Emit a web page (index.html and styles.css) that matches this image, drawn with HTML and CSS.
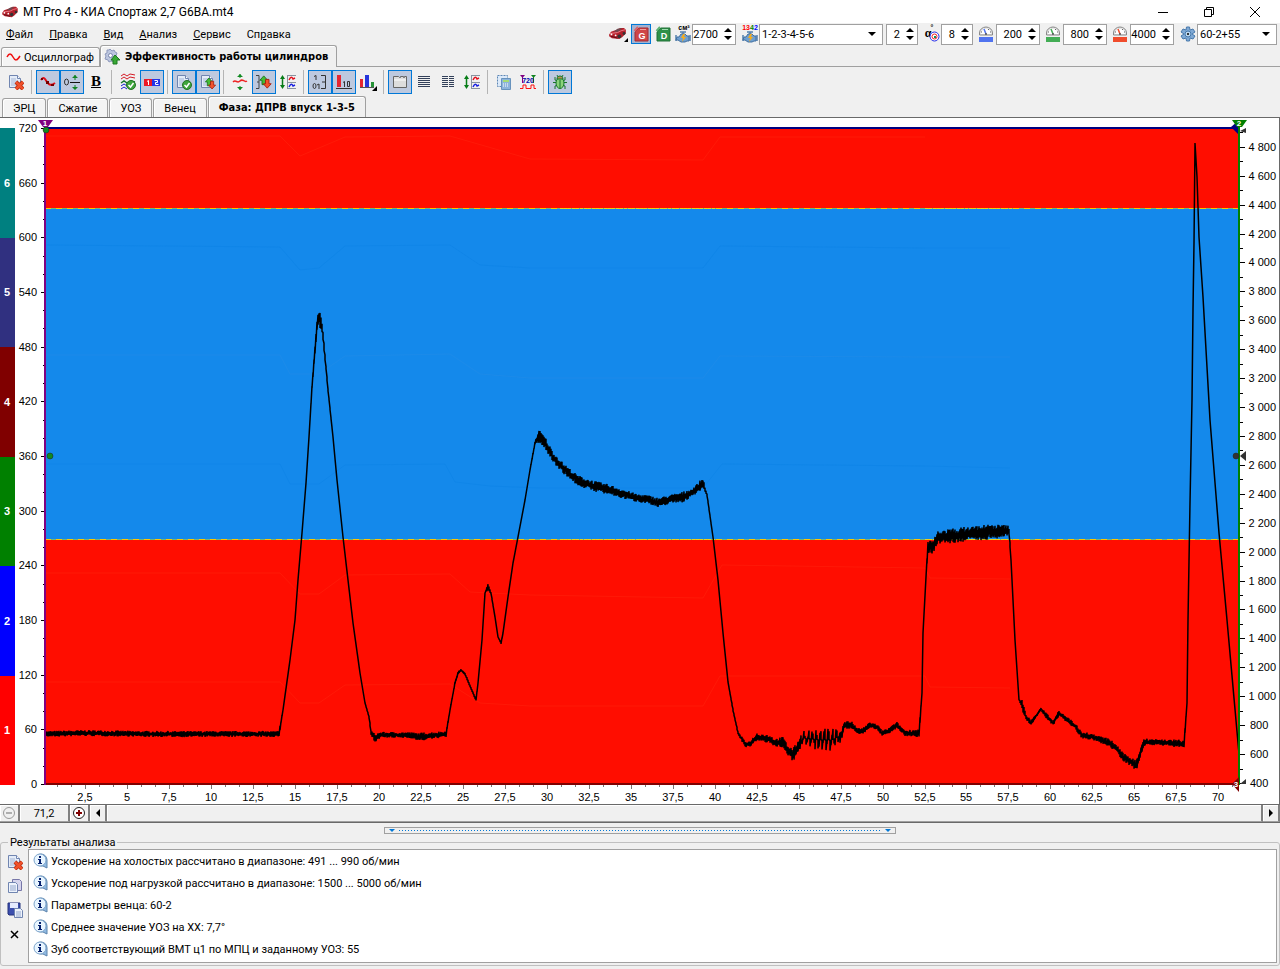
FILE: index.html
```html
<!DOCTYPE html>
<html lang="ru">
<head>
<meta charset="utf-8">
<title>MT Pro 4 - КИА Спортаж 2,7 G6BA.mt4</title>
<link rel="stylesheet" href="styles.css">
</head>
<body>
<svg class="defs" aria-hidden="true">
  <symbol id="car" viewBox="0 0 18 14"><path d="M0 8 2 5 8 3l4-2h4l2 2v4l-4 4-3 2-8-1-3-2z" fill="#b3202a"/><path d="m5 5 4-3 5-1-4 4z" fill="#6c4a50"/><path d="m1 7 8-1 4-2 4-1" stroke="#f0808a" fill="none"/><path d="m2 10 7 2" stroke="#5c0a12"/><circle cx="11" cy="10" r="2" fill="#333"/><circle cx="16" cy="7" r="1.500" fill="#333"/><circle cx="2.500" cy="8" r="1" fill="#fff"/><circle cx="7" cy="9" r="1" fill="#fff"/></symbol>
  <symbol id="page" viewBox="0 0 16 16"><path d="M1.500 1.500h8l3 3v9h-11z" fill="#e4ecf8" stroke="#7085b0"/><path d="M9.500 1.500v3h3" fill="#fff" stroke="#7085b0"/><path d="M3 5h5M3 7h7M3 9h7M3 11h7" stroke="#a5b6d6"/></symbol>
  <symbol id="delete" viewBox="0 0 16 16"><use href="#page"/><path d="m8 8 7 7m0-7-7 7" stroke="#a92a10" stroke-width="4"/><path d="m8 8 7 7m0-7-7 7" stroke="#f1502a" stroke-width="2.500"/></symbol>
  <symbol id="check" viewBox="0 0 16 16"><circle cx="11" cy="11" r="4.500" fill="#3fa53c" stroke="#247326"/><path d="m8.500 11 2 2 3-4" fill="none" stroke="#fff" stroke-width="1.500"/></symbol>
  <symbol id="updown" viewBox="0 0 14 16"><path d="m5 1 4.500 5H7v5H3V6H.5z" fill="#45bd35" stroke="#187318"/><path d="M7 5h4v5h2.500L9 15l-4.500-5H7z" fill="#f2532c" stroke="#a51d0c"/></symbol>
  <symbol id="stretch" viewBox="0 0 16 16"><path d="M2.500 3v10" stroke="#087d18" stroke-width="1.500"/><path d="m0 5 2.500-4L5 5zM0 11l2.500 4L5 11z" fill="#087d18"/><path d="M7.500 1v14M7 1.500h9M7 8.500h9M7 14.500h9" stroke="#88939f" fill="none"/><path d="M9 6c2-4 3-3 4-1l2-1" stroke="#e3101c" stroke-width="1.500" fill="none"/><path d="M9 13c2-4 3-3 4-1l2-1" stroke="#1820e0" stroke-width="1.500" fill="none"/></symbol>
  <symbol id="info" viewBox="0 0 16 16"><path d="M8 1a6 6 0 0 1 6 6v8l-4-2H8A6 6 0 0 1 8 1z" fill="#8fb9e2" stroke="#5c84ac"/><circle cx="7" cy="7" r="6" fill="#e8f5ff" stroke="#7fa6cc"/><path d="M6 3h2v2H6zM5 6h3v4h1v1H5v-1h1V7H5z" fill="#06216e"/></symbol>
  <symbol id="engine" viewBox="0 0 16 12"><path d="M5 1h6M8 1v2M1 4v6M15 4v6" stroke="#527fad" stroke-width="1.500"/><path d="M2 6h2l2-3h4l2 2h2v5h-2l-2 1H6L3 9H1z" fill="#6f9fd0" stroke="#416f9f"/><path d="M8 3 6 7h2l-1 4 4-5H9l1-3z" fill="#f2ac20"/></symbol>
  <symbol id="gauge" viewBox="0 0 14 16"><path d="M.5 9V7a6.500 6 0 0 1 13 0v2z" fill="#e6e6e6" stroke="#888"/><path d="M2 8a5 5 0 0 1 10 0z" fill="#fff"/><path d="m7 8-2-5" stroke="currentColor" stroke-width="1.500"/><path d="M2 6h1M11 6h1M10 3l-1 1" stroke="#666"/><circle cx="7" cy="8" r="1" fill="#555"/><path d="M0 11h14v5H0z" fill="currentColor"/></symbol>
  <symbol id="spin" viewBox="0 0 8 14"><path d="m0 5 4-4 4 4zM0 9l4 4 4-4z"/></symbol>
  <symbol id="drop" viewBox="0 0 8 4"><path d="M0 0h8L4 4z"/></symbol>
</svg>

<div class="app">
  <header class="titlebar">
    <svg class="car"><use href="#car"/></svg>
    <h1>MT Pro 4 - КИА Спортаж 2,7 G6BA.mt4</h1>
    <div class="window-buttons">
      <button aria-label="Свернуть"><svg viewBox="0 0 12 12"><path d="M1 6.500h10" stroke="#000"/></svg></button>
      <button aria-label="Восстановить"><svg viewBox="0 0 12 12"><path d="M1.500 3.500h7v7h-7zM3.500 3V1.500h7v7H9" fill="none" stroke="#000"/></svg></button>
      <button aria-label="Закрыть"><svg viewBox="0 0 12 12"><path d="m1 1 10 10M11 1 1 11" stroke="#000"/></svg></button>
    </div>
  </header>

  <div class="menu-row">
    <nav class="menu">
      <button><u>Ф</u>айл</button><button><u>П</u>равка</button><button><u>В</u>ид</button><button><u>А</u>нализ</button><button><u>С</u>ервис</button><button>Сп<u>р</u>авка</button>
    </nav>
    <div class="params">
      <button class="small-btn" aria-label="Автомобиль"><svg viewBox="0 0 20 20"><use href="#car" x="0" y="3" width="17" height="13"/><path d="M19 14v4h-4z"/></svg></button>
      <button class="small-btn pressed" aria-label="Бензин"><svg viewBox="0 0 20 20"><path d="m4 8 4-4h9v13H4z" fill="#cf4547" stroke="#a52b33"/><path d="m3.500 7 3.500-4" stroke="#d9646a" stroke-width="2"/><path d="M9 5.500h6" stroke="#f0a0a0"/><text x="11" y="15" class="fuel">G</text></svg></button>
      <button class="small-btn" aria-label="Дизель"><svg viewBox="0 0 20 20"><path d="m4 8 4-4h9v13H4z" fill="#2f9149" stroke="#207037"/><path d="m3.500 7 3.500-4" stroke="#5cb272" stroke-width="2"/><path d="M9 5.500h6" stroke="#a0dcb0"/><text x="11" y="15" class="fuel">D</text></svg></button>
      <label class="param"><svg class="param-icon" viewBox="0 0 16 18"><use href="#engine" y="6" width="16" height="12"/><text x="9" y="5" class="tiny">см³</text></svg><span class="spin w44"><input aria-label="Объём двигателя" value="2700"><svg><use href="#spin"/></svg></span></label>
      <label class="param gap"><svg class="param-icon" viewBox="0 0 16 18"><use href="#engine" y="6" width="16" height="12"/><text x="8" y="5" class="tiny"><tspan fill="red">1</tspan><tspan fill="red">3</tspan><tspan fill="green">4</tspan><tspan fill="blue">2</tspan></text></svg><span class="combo w124"><select aria-label="Порядок работы цилиндров"><option>1-2-3-4-5-6</option></select><svg><use href="#drop"/></svg></span></label>
      <span class="spin w32"><input aria-label="Тактов" value="2"><svg><use href="#spin"/></svg></span>
      <label class="param gap"><svg class="param-icon" viewBox="0 0 16 18"><text x="4" y="12" class="alpha">α</text><text x="8" y="5" class="tiny">°</text><circle cx="10.500" cy="11.500" r="4.500" fill="#fff" stroke="#2028e8"/><circle cx="10.500" cy="11.500" r="2.500" fill="none" stroke="#e22"/><path d="M10 11h2v2h-2z" fill="#185"/></svg><span class="spin w32"><input aria-label="Угол" value="8"><svg><use href="#spin"/></svg></span></label>
      <label class="param gap"><svg class="gauge blue"><use href="#gauge"/></svg><span class="spin w44"><input aria-label="Обороты запуска" value="200"><svg><use href="#spin"/></svg></span></label>
      <label class="param gap"><svg class="gauge green"><use href="#gauge"/></svg><span class="spin w44"><input aria-label="Обороты холостого хода" value="800"><svg><use href="#spin"/></svg></span></label>
      <label class="param gap"><svg class="gauge red"><use href="#gauge"/></svg><span class="spin w44"><input aria-label="Максимальные обороты" value="4000"><svg><use href="#spin"/></svg></span></label>
      <label class="param gap"><svg class="param-icon" viewBox="0 0 16 18"><path d="m6.500 2 3 0 .5 3 3-1 2 3-3 2 3 2-2 3-3-1-.5 3h-3L6 13l-3 1-2-3 3-2-3-2 2-3 3 1z" fill="#7fa9d5" stroke="#4779ac"/><circle cx="8" cy="9" r="3" fill="#bcd8f0" stroke="#4779ac"/><circle cx="8" cy="9" r="1"/></svg><span class="combo w80"><select aria-label="Формула венца"><option>60-2+55</option></select><svg><use href="#drop"/></svg></span></label>
    </div>
  </div>

  <div class="tabs main-tabs" role="tablist">
    <button role="tab"><svg viewBox="0 0 16 16"><path d="M1 8c2-4 4-4 6 0s4 4 7-1" fill="none" stroke="#f01010" stroke-width="1.500"/></svg>Осциллограф</button>
    <button role="tab" class="active" aria-selected="true"><svg viewBox="0 0 16 16"><path d="m6 0 2 2 2-1 1 2 2 1-1 3 1 2-2 2-1 2-3-1-2 1-1-2-3-1 1-3-1-2 2-1 0-3h2z" fill="#bcc6df" stroke="#8d98bc"/><circle cx="6.500" cy="6.500" r="2" fill="#fff" stroke="#7985ad"/><path d="m11 6 5 5h-3v4H9v-4H7z" fill="#38aa35" stroke="#1d7920"/></svg>Эффективность работы цилиндров</button>
  </div>

  <div class="toolbar" role="toolbar">
    <button class="tool" aria-label="Удалить"><svg viewBox="0 0 16 16"><use href="#delete"/></svg></button>
    <i></i>
    <button class="tool pressed" aria-label="Точки"><svg viewBox="0 0 16 16"><path d="M1 6c3-4 4-1 6 2s4 4 8 1" fill="none" stroke="#e00d18" stroke-width="2"/><path d="M1 4h2v2H1zM6 7h3v3H6zM11 10h3v2h-3z" fill="#700"/></svg></button>
    <button class="tool pressed" aria-label="Ноль"><svg viewBox="0 0 16 16"><ellipse cx="2.500" cy="8" rx="2" ry="3" fill="none" stroke="#333"/><path d="M6 8.500h10" stroke="#111"/><path d="M11 1v5m0 5v4" stroke="#128423"/><path d="m8 4 3-3 3 3zM8 13l3 3 3-3z" fill="#128423"/></svg></button>
    <button class="tool bold" aria-label="Жирный">B</button>
    <i></i>
    <button class="tool" aria-label="Проверить кривые"><svg viewBox="0 0 16 16"><path d="m1 2 3-2 3 2 3-2 5 1M1 5l3-2 3 2 3-2 5 1" stroke="#d51a25" fill="none"/><path d="m1 9 3-2 3 2 4-2 4 1" stroke="#14742d" stroke-width="1.500" fill="none"/><path d="m1 12 3-2 3 2m-6 3 3-2 3 2" stroke="#1720ce" fill="none"/><use href="#check"/></svg></button>
    <button class="tool pressed" aria-label="Номера цилиндров"><svg viewBox="0 0 16 16"><path d="M0 5h8v7H0z" fill="#ed1724"/><path d="M8 5h8v7H8z" fill="#2434e8"/><path d="m3 7.500 1.500-1v4.500m6-4.500h3v2h-2v2h3" fill="none" stroke="#fff"/></svg></button>
    <i></i>
    <button class="tool pressed" aria-label="Проверить отчёт"><svg viewBox="0 0 16 16"><use href="#page"/><use href="#check"/></svg></button>
    <button class="tool pressed" aria-label="Обновить отчёт"><svg viewBox="0 0 16 16"><use href="#page"/><use href="#updown" x="5" y="3" width="11" height="13"/></svg></button>
    <i></i>
    <button class="tool" aria-label="Сжать"><svg viewBox="0 0 16 16"><path d="M1 8c3-3 4 2 7-1s4 2 7 0" stroke="#e22" stroke-width="1.500" fill="none"/><path d="M8 0v4m0 8v4" stroke="#118a22"/><path d="m5 3 3-3 3 3zM5 13l3 3 3-3z" fill="#118a22"/></svg></button>
    <button class="tool pressed" aria-label="Масштаб"><svg viewBox="0 0 16 16"><path d="M0 1.500h3v13H0m1-6.500h2" stroke="#444" fill="none"/><use href="#updown" x="3" y="1" width="13" height="14"/></svg></button>
    <button class="tool" aria-label="Разнести кривые"><svg viewBox="0 0 16 16"><use href="#stretch"/></svg></button>
    <i></i>
    <button class="tool pressed" aria-label="Шкала"><svg viewBox="0 0 16 16"><path d="m2 2.500 2-1V6m5-4.500h4.500v13H9m1-6.500h3" stroke="#333" fill="none"/><ellipse cx="2.500" cy="12" rx="1.500" ry="2.500" fill="none" stroke="#333"/><path d="m5 11 2-1v5" stroke="#333" fill="none"/></svg></button>
    <button class="tool pressed" aria-label="Подписи"><svg viewBox="0 0 16 16"><path d="M1 1h4v12H1z" fill="#e42630"/><path d="M0 14.500h16M7 8.500l1.500-1V13" stroke="#333" fill="none"/><path d="M11.500 7.500h2v5h-2z" stroke="#333" fill="none"/></svg></button>
    <button class="tool" aria-label="Гистограмма"><svg viewBox="0 0 16 16"><path d="M0 5h3v8H0z" fill="#e42630"/><path d="M5 1h4v12H5z" fill="#2735db"/><path d="M11 8h3v5h-3z" fill="#279438"/><path d="M0 13.500h14" stroke="#555"/><path d="M17 12v5h-5z"/></svg></button>
    <i></i>
    <button class="tool pressed" aria-label="Вкладки"><svg viewBox="0 0 16 16"><path d="M1.500 2.500h5l1 1h1v-1h3v1h1v-1h2v11h-13z" fill="#ddd" stroke="#666"/><path d="M2 6h12" stroke="#fff"/></svg></button>
    <button class="tool" aria-label="Один столбец"><svg viewBox="0 0 16 16"><path d="M2 2.500h12m-12 2h12m-12 2h12m-12 2h12m-12 2h12m-12 2h12" stroke="#33415a"/></svg></button>
    <button class="tool" aria-label="Два столбца"><svg viewBox="0 0 16 16"><path d="M2 2.500h12m-12 2h12m-12 2h12m-12 2h12m-12 2h12m-12 2h12" stroke="#33415a" stroke-dasharray="6 1 5"/></svg></button>
    <button class="tool" aria-label="Растянуть"><svg viewBox="0 0 16 16"><use href="#stretch"/></svg></button>
    <i></i>
    <button class="tool" aria-label="Калькулятор"><svg viewBox="0 0 16 16"><path d="M1.500 1.500h10v11h-10z" fill="#dceafa" stroke="#5d86b4" stroke-dasharray="2 1"/><path d="M5.500 4.500h9v11h-9z" fill="#8db4dc" stroke="#6893bd"/><path d="M7 6h6v2H7z" fill="#a7dc73"/><path d="M7 10h6m-6 2h6" stroke="#fff" stroke-dasharray="1 1"/></svg></button>
    <button class="tool" aria-label="Диапазон 720"><svg viewBox="0 0 16 16"><path d="M0 1h5L2.500 4z" fill="#800080"/><path d="M2.500 3v6" stroke="#800080"/><path d="M11 1h5l-2.500 3z" fill="#108220"/><path d="M13.500 3v6" stroke="#108220"/><path d="M0 14.500h3V11h3v3.500h5V11h3v3.500h2" fill="none" stroke="#f11"/><text x="8" y="9" class="tiny" fill="#00a">720</text></svg></button>
    <i></i>
    <button class="tool pressed" aria-label="Отладка"><svg viewBox="0 0 16 16"><path d="m5 1 1 2m5-2-1 2M3 3v3l3 1m7-4v3l-3 1M1 8.500h14M3 15v-3l3-1m7 4v-3l-3-1" stroke="#18752a" fill="none"/><ellipse cx="8" cy="9" rx="4" ry="5.500" fill="#8bd37b" stroke="#18752a"/><path d="M5 5c0-4 6-4 6 0z" fill="#b2914d" stroke="#18752a"/><path d="M8 6v8" stroke="#18752a"/></svg></button>
  </div>

  <div class="tabs sub-tabs" role="tablist">
    <button role="tab">ЭРЦ</button><button role="tab">Сжатие</button><button role="tab">УОЗ</button><button role="tab">Венец</button><button role="tab" class="active" aria-selected="true">Фаза: ДПРВ впуск 1-3-5</button>
  </div>

  <main class="chart-panel">
    <div class="cylinders"><b class="c6">6</b><b class="c5">5</b><b class="c4">4</b><b class="c3">3</b><b class="c2">2</b><b class="c1">1</b></div>
    <div class="plot"><svg id="chart" role="img" aria-label="Фаза: ДПРВ впуск 1-3-5"></svg></div>
  </main>

  <div class="scroll-row">
    <button class="zoom-btn" aria-label="Уменьшить" disabled><svg viewBox="0 0 14 14"><circle cx="7" cy="7" r="5.500" fill="none" stroke="#999"/><path d="M4 7h6" stroke="#999" stroke-width="1.500"/></svg></button>
    <output class="span-value">71,2</output>
    <button class="zoom-btn" aria-label="Увеличить"><svg viewBox="0 0 14 14"><circle cx="7" cy="7" r="5.500" fill="#fff" stroke="#222"/><path d="M4 7h6M7 4v6" stroke="#800000" stroke-width="2"/></svg></button>
    <button class="arrow-btn" aria-label="Влево"><svg viewBox="0 0 8 8"><path d="M6 0v8L2 4z"/></svg></button>
    <div class="track"></div>
    <button class="arrow-btn" aria-label="Вправо"><svg viewBox="0 0 8 8"><path d="M2 0v8l4-4z"/></svg></button>
  </div>

  <div class="splitter"><button aria-label="Свернуть панель"><svg><use href="#drop"/></svg><span></span><svg><use href="#drop"/></svg></button></div>

  <fieldset class="results">
    <legend>Результаты анализа</legend>
    <div class="results-body">
      <div class="side-tools">
        <button aria-label="Очистить"><svg viewBox="0 0 16 16"><use href="#delete"/></svg></button>
        <button aria-label="Копировать"><svg viewBox="0 0 16 16"><path d="M5.500 1.500h7l2 2v9h-9z" fill="#d5d4ec" stroke="#7777a8"/><path d="M1.500 4.500h7l2 2v8h-9z" fill="#eef3fc" stroke="#7085b0"/><path d="M3 8h6m-6 2h6m-6 2h6" stroke="#93a6cc"/></svg></button>
        <button aria-label="Сохранить"><svg viewBox="0 0 16 16"><path d="M1 1h12v12H2l-1-1z" fill="#3c4fae" stroke="#25327c"/><path d="M3 1h8v5H3z" fill="#e5ebff"/><path d="M7.500 6.500h6l2 2v7h-8z" fill="#eef3fc" stroke="#7085b0"/><path d="M9 10h5m-5 2h5m-5 2h5" stroke="#93a6cc"/></svg></button>
        <button aria-label="Закрыть"><svg viewBox="0 0 16 16"><path d="m4 5 7 7m0-7-7 7" stroke="#000" stroke-width="1.500"/></svg></button>
      </div>
      <ul class="messages">
        <li><svg><use href="#info"/></svg>Ускорение на холостых рассчитано в диапазоне: 491 ... 990 об/мин</li>
        <li><svg><use href="#info"/></svg>Ускорение под нагрузкой рассчитано в диапазоне: 1500 ... 5000 об/мин</li>
        <li><svg><use href="#info"/></svg>Параметры венца: 60-2</li>
        <li><svg><use href="#info"/></svg>Среднее значение УОЗ на ХХ: 7,7°</li>
        <li><svg><use href="#info"/></svg>Зуб соответствующий ВМТ ц1 по МПЦ и заданному УОЗ: 55</li>
      </ul>
    </div>
  </fieldset>
</div>
<script src="chart.js"></script>
</body>
</html>
```
FILE: styles.css
```css
* { box-sizing: border-box; }
html, body { height: 100%; margin: 0; }
body { background: #f0f0f0; color: #000; font: 11px Roboto, "Noto Sans", sans-serif; }
button, input, select { font: inherit; color: inherit; margin: 0; padding: 0; border: 0; background: none; border-radius: 0; }
svg { display: block; flex: none; }
.defs { position: absolute; width: 0; height: 0; }
.app { display: flex; flex-direction: column; height: 100vh; min-height: 500px; overflow: hidden; }
.app > * { flex: none; }

.titlebar { height: 23px; background: #fff; display: flex; align-items: center; padding-left: 2px; gap: 5px; }
.titlebar .car { width: 16px; height: 12px; }
.titlebar h1 { margin: 0; flex: 1; font: 12px Roboto, "Noto Sans", sans-serif; }
.window-buttons { display: flex; padding-right: 2px; }
.window-buttons button { width: 46px; height: 20px; display: flex; align-items: center; justify-content: center; }
.window-buttons svg { width: 12px; height: 12px; }

.menu-row { height: 22px; display: flex; justify-content: space-between; }
.menu { display: flex; align-items: center; gap: 16px; padding-left: 6px; }
.params { display: flex; align-items: center; padding-right: 3px; gap: 3px; }
.param { display: flex; align-items: center; gap: 1px; }
.param.gap { padding-left: 3px; }
.param-icon { width: 16px; height: 18px; overflow: visible; }
.gauge { width: 14px; height: 16px; margin-right: 2px; }
.gauge.blue { color: #5073ef; }
.gauge.green { color: #43ad55; }
.gauge.red { color: #f04c2c; }
.small-btn { width: 20px; height: 20px; margin-right: -1px; }
.small-btn svg { width: 20px; height: 20px; }
.small-btn.pressed { outline: 1px solid #0078d7; outline-offset: -1px; background: #a5b2cf; }
.fuel { font: bold 9px "Liberation Sans", sans-serif; fill: #fff; text-anchor: middle; }
.tiny { font: bold 7px "Liberation Sans", sans-serif; text-anchor: middle; }
.alpha { font: bold 12px "Liberation Serif", serif; text-anchor: middle; }
.spin, .combo { display: flex; align-items: center; height: 21px; background: #fff; border: 1px solid #a0a0a0; }
.w32 { width: 32px; }
.w44 { width: 44px; }
.w80 { width: 80px; }
.w124 { width: 124px; }
.spin input { flex: 1; min-width: 0; text-align: right; padding-right: 6px; outline: none; }
.spin svg { width: 8px; height: 14px; margin-right: 3px; }
.combo select { flex: 1; min-width: 0; appearance: none; padding-left: 2px; outline: none; }
.combo svg { width: 8px; height: 4px; margin-right: 6px; }

.tabs { display: flex; align-items: flex-end; }
.tabs button { display: flex; align-items: center; justify-content: center; border: 1px solid #a0a0a0; border-bottom: 0; border-radius: 3px 3px 0 0; background: #f4f4f4; box-shadow: inset 1px 1px #fff; }
.tabs .active { font: bold 11px "DejaVu Sans Condensed", "Noto Sans", sans-serif; background: #f0f0f0; }
.main-tabs { height: 22px; padding-left: 1px; border-bottom: 1px solid #a0a0a0; }
.main-tabs button { height: 19px; padding: 0 5px 0 4px; gap: 2px; }
.main-tabs .active { height: 22px; margin-bottom: -1px; padding: 0 8px 0 3px; gap: 5px; }
.main-tabs svg { width: 16px; height: 16px; }
.toolbar { height: 29px; display: flex; align-items: center; padding-left: 4px; }
.toolbar i { width: 8px; height: 24px; border-left: 1px solid #b4b4b4; margin-left: 3px; margin-right: -3px; }
.tool { width: 24px; height: 24px; display: flex; align-items: center; justify-content: center; }
.tool svg { width: 16px; height: 16px; overflow: visible; }
.tool.pressed { background: #bdc9df; border: 1px solid #0078d7; }
.tool.bold { font: bold 15px "Liberation Serif", serif; text-decoration: underline; }
.sub-tabs { height: 21px; padding-left: 2px; }
.sub-tabs button { height: 19px; padding: 0 10px; }
.sub-tabs button + button { margin-left: 1px; }
.sub-tabs .active { height: 21px; }

.app > .chart-panel { flex: 1 1 0; min-height: 0; display: flex; background: #fff; border: 1px solid #696969; border-left: 0; }
.cylinders { width: 15px; margin: 10px 0 19px; display: flex; flex-direction: column; }
.cylinders b { flex: 1; display: flex; align-items: center; justify-content: center; padding-right: 1px; color: #fff; font: bold 11px "Liberation Sans", sans-serif; }
.c6 { background: #008080; }
.c5 { background: #303080; }
.c4 { background: #800000; }
.c3 { background: #008000; }
.c2 { background: #00f; }
.c1 { background: #f00; }
.plot { flex: 1; min-width: 0; overflow: hidden; }
#chart { width: 100%; height: 100%; }
#chart text { font: 11px "Liberation Sans", sans-serif; }
#chart .marker { font: bold 8px "Liberation Sans", sans-serif; fill: #fff; text-anchor: middle; }
.start { text-anchor: start; }
.middle { text-anchor: middle; }
.end { text-anchor: end; }

.scroll-row { height: 18px; display: flex; border-bottom: 1px solid #696969; }
.scroll-row button, .scroll-row output, .track { border-right: 2px solid #808080; border-bottom: 1px solid #a0a0a0; box-shadow: inset 1px 1px #fff; display: flex; align-items: center; justify-content: center; }
.zoom-btn { width: 20px; }
.zoom-btn svg { width: 14px; height: 14px; }
.scroll-row .span-value { width: 50px; }
.scroll-row .arrow-btn { width: 17px; }
.arrow-btn svg { width: 8px; height: 8px; }
.track { flex: 1; }
.splitter { height: 13px; padding-top: 4px; display: flex; justify-content: center; }
.splitter button { width: 40%; height: 7px; border: 1px solid #a0a0a0; display: flex; align-items: center; gap: 4px; padding: 0 4px; }
.splitter svg { width: 6px; height: 3px; fill: #0078d7; }
.splitter span { flex: 1; height: 1px; background: repeating-linear-gradient(90deg, #0078d7 0 1px, transparent 1px 3px); }

.results { margin: 0 0 3px; padding: 0 2px 2px 3px; border: 1px solid #c0c0c0; border-radius: 3px; min-width: 0; }
.results legend { margin-left: 4px; padding: 0 2px; line-height: 13px; }
.results-body { display: flex; }
.side-tools { width: 24px; padding-top: 5px; display: flex; flex-direction: column; gap: 8px; }
.side-tools button, .side-tools svg { width: 16px; height: 16px; }
.side-tools button { margin-left: 3px; }
.messages { flex: 1; margin: 0; padding: 0 0 2px 4px; list-style: none; background: #fff; border: 1px solid #a0a0a0; }
.messages li { height: 22px; display: flex; align-items: center; gap: 2px; }
.messages svg { width: 16px; height: 16px; }
```
FILE: chart.js
```js
// Speed trace: x, y and ripple amplitude on the recording grid.
const GRID = { x: 45, y: 128, w: 1194, h: 656 };
const TRACE = [
  [45,734,2],[85,733,2],[150,734,2],[279,734,2],[283,710,0],[290,660,0],[295,620,0],[298,580,0],[302,533,0],[306,483,0],[309,437,0],[312,387,1],[315,350,3],[317,327,4],[319,317,7],[322,327,5],[325,357,2],[328,390,1],[333,437,0],[337,480,0],[343,537,0],[348,580,0],[353,623,0],[360,673,0],[365,703,0],[369,717,1],[371,733,2],[375,738,3],[380,735,2],[410,735,2],[418,737,3],[446,734,2],
  [450,710,0],[455,683,1],[458,673,1],[461,670,1],[465,674,1],[476,700,1],[478,683,0],[482,640,0],[485,593,0],[488,587,2],[491,593,1],[495,617,0],[498,637,0],[501,643,1],[503,633,0],[508,597,0],[513,563,0],[518,537,0],[525,500,0],[530,470,0],[535,443,1],[539,436,5],[545,443,5],[553,457,4],[563,468,4],[577,480,4],[590,485,4],[610,490,4],[637,498,3],[647,499,3],[658,503,4],[670,499,3],[683,497,4],[693,492,3],[703,483,4],[707,495,1],[713,537,0],[718,580,0],[723,633,0],[728,682,0],[733,710,1],[738,733,1],[745,744,2],[750,744,2],[757,737,3],[770,739,3],[775,743,3],[783,742,4],[787,750,5],[793,755,5],[798,747,5],[803,738,8],[820,740,11],[832,740,11],[842,735,4],[844,725,3],[852,725,3],[857,731,2],[863,731,2],[870,725,2],[877,727,2],[882,733,2],[887,732,2],[897,725,2],[905,733,2],[919,733,3],
  [922,693,0],[923,633,0],[926,577,0],[928,547,5],[933,547,5],[938,537,5],[953,536,6],[968,534,6],[987,532,6],[1003,531,5],[1009,531,4],[1011,560,0],[1015,640,0],[1019,700,0],[1022,705,4],[1026,717,2],[1031,723,2],[1036,716,1],[1041,709,1],[1046,715,2],[1053,723,2],[1059,713,2],[1075,726,2],[1082,735,3],[1093,737,2],[1110,743,3],[1118,750,3],[1123,757,3],[1133,763,4],[1136,766,4],[1144,742,3],[1157,742,2],[1184,744,3],[1187,703,0],[1188,620,0],[1190,503,0],[1192,400,0],[1193,310,0],[1194,243,0],[1195,143,0],[1197,177,0],[1199,237,0],[1203,297,0],[1210,420,0],[1219,533,0],[1227,620,0],[1239,754,0]
];
// Faint contours inside the phase bands, colour and points.
const CONTOURS = [
  ["#ff3418", "45,573 280,573 300,594 319,594 345,575 450,574 470,592 530,595 703,598 722,565 925,568 930,578 1010,579"],
  ["#ff3418", "45,682 280,682 300,703 319,703 345,685 450,684 480,703 530,706 703,706 720,676 925,676 930,687 1010,688"],
  ["#087de2", "45,245 280,247 300,270 319,268 345,246 450,245 480,265 530,268 703,268 720,246 925,248 1010,248"],
  ["#2f90e3", "45,355 280,355 290,374 319,374 345,356 450,354 480,374 530,378 703,378 720,356 925,357 1010,357"],
  ["#087de2", "45,464 280,464 290,484 319,484 345,465 445,464 455,482 490,486 540,488 703,488 722,464 925,466 1010,468"],
  ["#ff3418", "45,136 280,136 300,156 345,137 450,136 530,159 703,160 720,137 925,137"]
];

const svg = document.getElementById("chart");
let parts = [];
const rect = (x, y, w, h, fill) => parts.push(`<rect x="${x}" y="${y}" width="${w}" height="${h}" fill="${fill}"/>`);
const label = (x, y, cls, text) => parts.push(`<text x="${x}" y="${y}" class="${cls}">${text}</text>`);

function draw() {
  const W = svg.clientWidth, H = svg.clientHeight;
  const L = 30, R = W - 40, T = 10, B = H - 20;
  const px = x => L + (x - GRID.x) / GRID.w * (R - L);
  const py = y => T + (y - GRID.y) / GRID.h * (B - T);
  parts = [];
  const upper = Math.round(py(208)), lower = Math.round(py(539));
  rect(L, T, R - L, B - T, "#ff0d00");
  rect(L, upper, R - L, lower - upper, "#1489eb");
  for (const [color, points] of CONTOURS) {
    const mapped = points.split(" ").map(p => { const [x, y] = p.split(","); return px(+x) + "," + py(+y); }).join(" ");
    parts.push(`<polyline points="${mapped}" fill="none" stroke="${color}" opacity=".3"/>`);
  }
  for (const y of [upper, lower]) {
    parts.push(`<path d="M${L} ${y + 0.5}H${R}" stroke="#71b47d"/><path d="M${L} ${y + 0.5}H${R}" stroke="#ffc400" stroke-dasharray="6 5"/>`);
    parts.push(`<path d="M${px(560)} ${y + 0.5}H${px(715)}M${px(925)} ${y + 0.5}H${px(1012)}" stroke="#e8d020" stroke-dasharray="3 1"/>`);
  }

  let seed = 7;
  const random = () => (seed = (seed * 16807) % 2147483647) / 2147483647;
  let d = "";
  for (let i = 0; i < TRACE.length - 1; i++) {
    const [x0, y0, a0] = TRACE[i], [x1, y1, a1] = TRACE[i + 1];
    for (let x = x0; x < x1; x++) {
      const k = (x - x0) / (x1 - x0), y = y0 + (y1 - y0) * k;
      const ripple = a0 + (a1 - a0) * k, a = ripple > 1 ? ripple + 0.5 : ripple;
      const sparse = a > 6 && x > 800 && x < 845;
      const up = sparse ? (x % 4 < 2 ? a * (0.2 + 0.8 * random()) : 0) : a * (0.4 + 0.8 * random());
      const down = sparse ? (x % 4 < 2 ? 0 : a * (0.2 + 0.8 * random())) : a * (0.4 + 0.8 * random());
      d += `${d ? "L" : "M"}${px(x).toFixed(1)} ${py(y - up).toFixed(1)}`;
      if (a > 0) d += `V${py(y + down).toFixed(1)}`;
    }
  }
  d += `L${R} ${py(754)}`;
  parts.push(`<path d="${d}" fill="none" stroke="#000" stroke-width="1.500" stroke-linejoin="bevel"/>`);

  rect(L, T - 1, R - L, 2, "#000080");
  rect(L, B - 1, R - L, 2, "#800000");
  for (let v = 0; v <= 720; v += 20) {
    const y = Math.round(B - v / 720 * (B - T)), major = v % 60 === 0;
    rect(L - (major ? 4 : 2), y, major ? 4 : 2, 1, "#000");
    if (major) label(L - 8, y + 4, "end", v);
  }
  for (let v = 400; v <= 4900; v += 100) {
    const y = Math.round(B - 1 - (v - 400) / 4537 * (B - T)), major = v % 200 === 0;
    rect(R + 1, y, major ? 5 : 3, 1, "#000");
    if (major) label(v < 1000 ? W - 29 : W - 3, y + 4, v < 1000 ? "start" : "end", v < 1000 ? v : `${Math.floor(v / 1000)} ${String(v % 1000).padStart(3, "0")}`);
  }
  for (let i = 1; i <= 85; i++) {
    const t = i * 2.5 / 3, x = Math.round(px(43.3 + t * 16.785)), major = i % 3 === 0;
    if (x > R) break;
    rect(x, B + 1, 1, major ? 4 : 2, "#777");
    if (major) label(x, B + 17, "middle", String(i / 3 * 2.5).replace(".", ","));
  }
  rect(L - 1, T - 4, 2, B - T + 5, "#800080");
  rect(R - 1, T - 4, 2, B - T + 5, "#008000");

  const mid = Math.round((T + B) / 2);
  const dot = (x, y, color) => parts.push(`<circle cx="${x}" cy="${y}" r="3" fill="${color}" stroke="#222" stroke-width=".5"/>`);
  dot(L + 1, T + 2, "#118a20");
  dot(L + 5, mid, "#118a20");
  dot(R - 3, mid, "#333");
  parts.push(`<path d="M${R + 1} ${mid}l6-5v10z" fill="#333"/>`);
  parts.push(`<path d="M${R - 8} ${T - 1}l7-6v13z" fill="#000080"/><path d="M${R - 7} ${B}l7-7v15z" fill="#800000"/>`);
  parts.push(`<path d="M${L - 7} ${T - 8}h15l-5 7h-5z" fill="#800080"/><path d="M${R - 7} ${T - 8}h15l-5 7h-5z" fill="#008000"/>`);
  parts.push(`<path d="M${R + 1} ${T + 3}l6-3v5zM${R + 1} ${B}l6-5v5z" fill="#333"/>`);
  label(L, T - 2, "marker", 1);
  label(R, T - 2, "marker", 2);
  label(R - 3, B + 3, "marker", 3);
  svg.innerHTML = parts.join("");
}
draw();
window.addEventListener("resize", draw);
```
